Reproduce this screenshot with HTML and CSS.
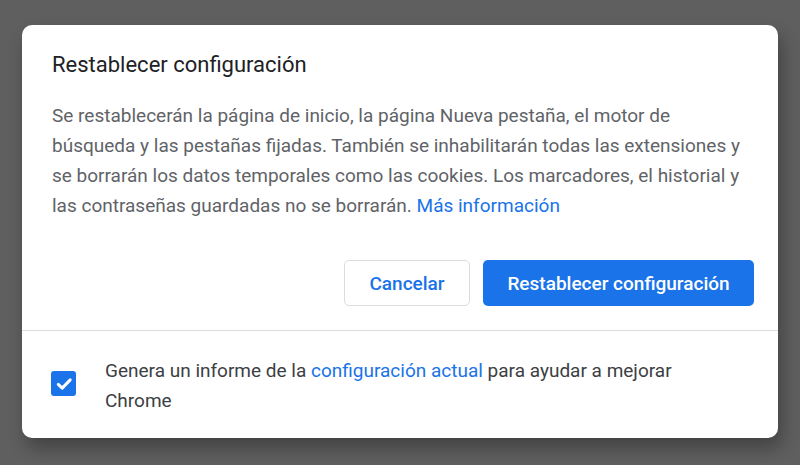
FILE: index.html
```html
<!DOCTYPE html>
<html lang="es">
<head>
    <meta charset="UTF-8">
    <title>Restablecer configuración</title>
    <link rel="stylesheet" href="styles.css">
</head>
<body>
    <div class="dialog">
        <div class="dialog-main">
            <h2 class="dialog-title">Restablecer configuración</h2>
            <p class="dialog-text">
                Se restablecerán la página de inicio, la página Nueva pestaña, el motor de
                búsqueda y las pestañas fijadas. También se inhabilitarán todas las extensiones y
                se borrarán los datos temporales como las cookies. Los marcadores, el historial y
                las contraseñas guardadas no se borrarán. <a href="#" class="link">Más información</a>
            </p>
            <div class="actions">
                <button class="btn btn-outline">Cancelar</button>
                <button class="btn btn-primary">Restablecer configuración</button>
            </div>
        </div>
        <label class="dialog-footer">
            <span class="checkbox">
                <svg width="24" height="24" viewBox="0 0 24 24">
                    <path d="M6.3 12.4 L10.2 16.1 L18.2 7.9" fill="none" stroke="#fff" stroke-width="3" stroke-linecap="round" stroke-linejoin="round"/>
                </svg>
            </span>
            <span class="footer-text">Genera un informe de la <a href="#" class="link">configuración actual</a> para ayudar a mejorar Chrome</span>
        </label>
    </div>
</body>
</html>
```

FILE: styles.css
```css
* {
    box-sizing: border-box;
}
body {
    margin: 0;
    padding: 25px 22px;
    background: #5f5f5f;
    font-family: Roboto, 'Liberation Sans', sans-serif;
}
.dialog {
    width: 756px;
    height: 413px;
    background: #fff;
    border-radius: 10px;
    box-shadow: 4px 10px 18px rgba(0, 0, 0, 0.3);
    overflow: hidden;
}
.dialog-main {
    padding: 27px 24px 24px 30px;
    border-bottom: 1px solid #dadce0;
}
.dialog-title {
    margin: 0;
    font-size: 22px;
    line-height: 26px;
    font-weight: 400;
    color: #202124;
}
.dialog-text {
    margin: 23px 0 0;
    font-size: 19px;
    line-height: 30px;
    color: #5f6368;
}
.link {
    color: #1a73e8;
    text-decoration: none;
}
.actions {
    display: flex;
    justify-content: flex-end;
    gap: 13px;
    margin-top: 39px;
}
.btn {
    height: 46px;
    padding: 0;
    border-radius: 5px;
    font-family: inherit;
    font-size: 19px;
    font-weight: 500;
    cursor: pointer;
}
.btn-outline {
    width: 126px;
    background: #fff;
    color: #1a73e8;
    border: 1px solid #dadce0;
}
.btn-primary {
    width: 271px;
    background: #1a73e8;
    color: #fff;
    border: none;
}
.dialog-footer {
    display: flex;
    align-items: center;
    gap: 29px;
    padding: 25px 30px 21px 29px;
}
.checkbox {
    flex: none;
    width: 25px;
    height: 25px;
    margin-bottom: 5px;
    border-radius: 3px;
    background: #1a73e8;
    display: flex;
    align-items: center;
    justify-content: center;
}
.footer-text {
    width: 600px;
    font-size: 19px;
    line-height: 30px;
    color: #3c4043;
}
```
